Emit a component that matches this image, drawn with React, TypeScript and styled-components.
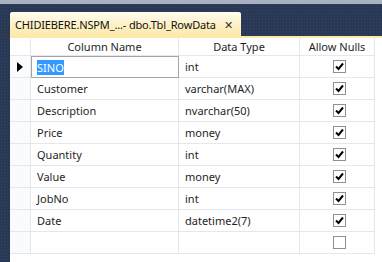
import React from 'react';
import styled, { createGlobalStyle } from 'styled-components';

const GlobalStyle = createGlobalStyle`
  html, body {
    margin: 0;
    padding: 0;
    width: 382px;
    height: 262px;
    overflow: hidden;
    font-family: "Noto Sans", "Open Sans", sans-serif;
  }
`;

const Frame = styled.div`
  width: 382px;
  height: 262px;
  display: flex;
  flex-direction: column;
  background-color: #293955;
  background-image: radial-gradient(rgba(255, 255, 255, 0.06) 1px, transparent 1px);
  background-size: 3px 3px;
`;

const TopBand = styled.div`
  height: 4px;
  background: #a9b2c2;
`;

const Body = styled.div`
  flex: 1;
  display: flex;
  padding-left: 10px;
  min-height: 0;
`;

const Content = styled.div`
  flex: 1;
  display: flex;
  flex-direction: column;
`;

const TabStrip = styled.div`
  height: 32px;
  display: flex;
  align-items: flex-end;
`;

const Tab = styled.div`
  width: 231px;
  height: 24px;
  box-sizing: border-box;
  padding: 0 0 0 5px;
  display: flex;
  align-items: center;
  gap: 8px;
  border-radius: 2px 2px 0 0;
  background: linear-gradient(#fffcf2, #fdf0c4 55%, #fde9aa);
  color: #111;
  font-size: 11px;
  letter-spacing: -0.15px;
  white-space: nowrap;
`;

const Close = styled.span`
  font-size: 11px;
  color: #333;
`;

const GoldBar = styled.div`
  height: 2px;
  background: #fde9aa;
`;

const Panel = styled.div`
  flex: 1;
  background: #fff;
`;

const Row = styled.div<{ $head?: boolean }>`
  display: grid;
  grid-template-columns: 21px 148px 121px 75px;
  height: ${(p) => (p.$head ? '18px' : '22px')};
  font-size: 11px;
  color: #1e1e1e;
`;

const Cell = styled.div<{ $center?: boolean }>`
  box-sizing: border-box;
  border-right: 1px solid #e4e8ee;
  border-bottom: 1px solid #e4e8ee;
  display: flex;
  align-items: center;
  justify-content: ${(p) => (p.$center ? 'center' : 'flex-start')};
  padding-left: ${(p) => (p.$center ? '0' : '6px')};
  white-space: nowrap;
`;

const RowHead = styled.div`
  box-sizing: border-box;
  border-right: 1px solid #e4e8ee;
  border-bottom: 1px solid #e4e8ee;
  background: #fafbfc;
  display: flex;
  align-items: center;
  justify-content: center;
`;

const Editor = styled(Cell)`
  border: 1px solid #a5a5a5;
  padding-left: 5px;
`;

const Selected = styled.span`
  background: #3399ff;
  color: #fff;
`;

const Arrow = styled.span`
  width: 0;
  height: 0;
  border-top: 5px solid transparent;
  border-bottom: 5px solid transparent;
  border-left: 6px solid #000;
  margin-left: -1px;
`;

const Box = styled.span`
  width: 13px;
  height: 13px;
  box-sizing: border-box;
  border: 1px solid #8e8f8f;
  background: #fff;
  display: flex;
  align-items: center;
  justify-content: center;
  margin-left: 4px;
`;

const Check = ({ on }: { on: boolean }) => (
  <Box>
    {on && (
      <svg width="9" height="9" viewBox="0 0 9 9">
        <path d="M1 4.5 L3.5 7 L8 1.5" fill="none" stroke="#000" strokeWidth="2" />
      </svg>
    )}
  </Box>
);

const rows = [
  ['Customer', 'varchar(MAX)'],
  ['Description', 'nvarchar(50)'],
  ['Price', 'money'],
  ['Quantity', 'int'],
  ['Value', 'money'],
  ['JobNo', 'int'],
  ['Date', 'datetime2(7)'],
];

const App: React.FC = () => {
  return (
    <Frame>
      <GlobalStyle />
      <TopBand />
      <Body>
        <Content>
          <TabStrip>
            <Tab>
              <span>CHIDIEBERE.NSPM_...- dbo.Tbl_RowData</span>
              <Close>✕</Close>
            </Tab>
          </TabStrip>
          <GoldBar />
          <Panel>
            <Row $head>
              <Cell />
              <Cell $center>Column Name</Cell>
              <Cell $center>Data Type</Cell>
              <Cell $center>Allow Nulls</Cell>
            </Row>
            <Row>
              <RowHead><Arrow /></RowHead>
              <Editor><Selected>SINO</Selected></Editor>
              <Cell>int</Cell>
              <Cell $center><Check on /></Cell>
            </Row>
            {rows.map(([name, type]) => (
              <Row key={name}>
                <RowHead />
                <Cell>{name}</Cell>
                <Cell>{type}</Cell>
                <Cell $center><Check on /></Cell>
              </Row>
            ))}
            <Row>
              <RowHead />
              <Cell />
              <Cell />
              <Cell $center><Check on={false} /></Cell>
            </Row>
          </Panel>
        </Content>
      </Body>
    </Frame>
  );
};

export default App;
